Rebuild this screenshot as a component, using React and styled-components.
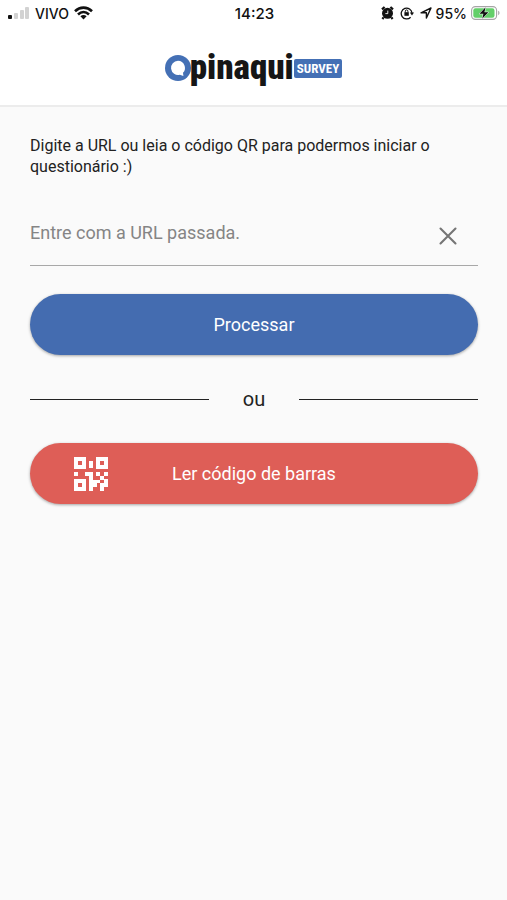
import React, { useState } from "react";
import styled, { createGlobalStyle } from "styled-components";

const QR_PATH =
  "M0 0h12v12H0zM4 4v4h4V4zM22 0h12v12H22zM26 4v4h4V4zM0 22h12v12H0zM4 26v4h4v-4z" +
  "M15 4h4v7h-4zM0 15h4v4H0zM11 15h8v8h-4v-4h-4zM22 15h4v4h-4zM30 15h4v4h-4zM26 19h4v4h-4z" +
  "M15 23h11v3h-3v4h-4v4h-4zM30 22h4v8h-4zM26 26h4v8h-4z";

const SignalIcon = () => (
  <svg width="22" height="14" viewBox="0 0 22 14" aria-hidden="true">
    <rect x="0" y="9" width="4" height="4" rx="1" fill="#111" />
    <rect x="6" y="7" width="4" height="6" rx="1" fill="#d2d2d2" />
    <rect x="12" y="4" width="4" height="9" rx="1" fill="#d2d2d2" />
    <rect x="17" y="1" width="4" height="12" rx="1" fill="#d2d2d2" />
  </svg>
);

const WifiIcon = () => (
  <svg width="19" height="14" viewBox="0 0 19 14" fill="none" stroke="#111" strokeWidth="2.6" aria-hidden="true">
    <path d="M1 5.2C6 .4 13 .4 18 5.2" />
    <path d="M4 8.5c3.4-3.2 7.6-3.2 11 0" />
    <path d="M6.4 10.3c1.9-1.6 4.3-1.6 6.2 0L9.5 13.6z" fill="#111" stroke="none" />
  </svg>
);

const AlarmIcon = () => (
  <svg width="13" height="14" viewBox="0 0 13 14" aria-hidden="true">
    <path d="M1 3.4 3.6 1M12 3.4 9.4 1M2.6 11.4 1.4 13M10.4 11.4l1.2 1.6" stroke="#111" strokeWidth="2.2" />
    <circle cx="6.5" cy="7.3" r="5.5" fill="#111" />
    <path d="M6.8 4.6v3H4.4" fill="none" stroke="#fff" strokeWidth=".9" />
  </svg>
);

const RotationLockIcon = () => (
  <svg width="14" height="14" viewBox="0 0 14 14" fill="none" stroke="#111" strokeWidth="1.3" aria-hidden="true">
    <path d="M10.6 11.2A5.4 5.4 0 1 1 12 7" />
    <path d="M9.8 6.6h4.2L12 9.4z" fill="#111" stroke="none" />
    <rect x="4.4" y="6.2" width="4.4" height="3.6" fill="#111" stroke="none" />
    <path d="M5.3 6.4V5.2a1.3 1.3 0 0 1 2.6 0v1.2" strokeWidth="1" />
  </svg>
);

const LocationIcon = () => (
  <svg width="12" height="12" viewBox="0 0 12 12" aria-hidden="true">
    <path d="M1 5.8 11 1 6.4 11V5.8z" fill="none" stroke="#111" strokeWidth="1.4" strokeLinejoin="round" />
  </svg>
);

const BatteryIcon = () => (
  <svg width="30" height="14" viewBox="0 0 30 14" aria-hidden="true">
    <rect x=".6" y=".6" width="25" height="12.8" rx="3.8" fill="#fff" stroke="#a5a5a5" strokeWidth="1.1" />
    <rect x="2.3" y="2.3" width="21.2" height="9.4" rx="2.2" fill="#63cf69" />
    <path d="M27.2 4.8c1.7.6 1.7 3.8 0 4.4z" fill="#a5a5a5" />
    <path d="M14.6 1.2 8.4 7.8h4l-1.2 5 6.2-6.6h-4z" fill="#111" stroke="#fff" strokeWidth="1" paintOrder="stroke" />
  </svg>
);

const LogoMark = () => (
  <svg width="26" height="26" viewBox="0 0 26 26" aria-hidden="true">
    <circle cx="13" cy="13" r="13" fill="#4470b5" />
    <path d="M13 5.8a7.1 7.1 0 0 1 5 12l.4 3.2-3.6-1.2A7.1 7.1 0 1 1 13 5.8z" fill="#fff" />
  </svg>
);

const App = () => {
  const [url, setUrl] = useState("");

  return (
    <Page>
      <GlobalStyle />
      <Header>
        <StatusBar>
          <StatusGroup>
            <SignalIcon />
            <span>VIVO</span>
            <WifiIcon />
          </StatusGroup>
          <Clock>14:23</Clock>
          <StatusGroup $end>
            <StatusIcons>
              <AlarmIcon />
              <RotationLockIcon />
              <LocationIcon />
            </StatusIcons>
            <span>95%</span>
            <BatteryIcon />
          </StatusGroup>
        </StatusBar>
        <Logo aria-label="Opinaqui Survey">
          <LogoMark />
          <LogoName>pinaqui</LogoName>
          <LogoTag>SURVEY</LogoTag>
        </Logo>
      </Header>

      <Content onSubmit={(e) => e.preventDefault()}>
        <Intro htmlFor="survey-url">
          Digite a URL ou leia o código QR para podermos iniciar o questionário :)
        </Intro>
        <Field>
          <UrlInput
            id="survey-url"
            type="text"
            placeholder="Entre com a URL passada."
            value={url}
            onChange={(e) => setUrl(e.target.value)}
          />
          <ClearButton type="button" aria-label="Limpar" onClick={() => setUrl("")}>
            <svg width="18" height="18" viewBox="0 0 18 18" aria-hidden="true">
              <path d="M1.5 1.5l15 15M16.5 1.5l-15 15" stroke="#757575" strokeWidth="2.1" strokeLinecap="round" />
            </svg>
          </ClearButton>
        </Field>
        <PillButton type="submit" $color="#446cb0">
          <span>Processar</span>
        </PillButton>
        <Divider>ou</Divider>
        <PillButton type="button" $color="#de5e57">
          <svg width="34" height="34" viewBox="0 0 34 34" aria-hidden="true">
            <path d={QR_PATH} fill="#fff" fillRule="evenodd" />
          </svg>
          <span>Ler código de barras</span>
        </PillButton>
      </Content>
    </Page>
  );
};

const GlobalStyle = createGlobalStyle`
  * {
    box-sizing: border-box;
  }

  body {
    margin: 0;
    background: #fafafa;
    color: #222;
    font-family: Roboto, "Liberation Sans", sans-serif;
  }

  button,
  input {
    font: inherit;
  }

  svg {
    flex: none;
  }
`;

const Page = styled.div`
  min-height: 100vh;
`;

const Header = styled.header`
  padding-bottom: 19px;
  background: #fff;
  border-bottom: 2px solid #ececec;
`;

const StatusBar = styled.div`
  display: grid;
  grid-template-columns: 1fr auto 1fr;
  align-items: center;
  height: 26px;
  padding: 0 6px 0 8px;
  color: #111;
  font-family: Inter, sans-serif;
  font-size: 14px;
  font-weight: 500;
`;

const Clock = styled.span`
  font-size: 15px;
`;

const StatusGroup = styled.div`
  display: flex;
  align-items: center;
  justify-content: ${({ $end }) => ($end ? "flex-end" : "flex-start")};
  gap: ${({ $end }) => ($end ? 4 : 5)}px;
`;

const StatusIcons = styled.div`
  display: flex;
  align-items: center;
  gap: 6px;
`;

const Logo = styled.h1`
  display: flex;
  align-items: center;
  justify-content: center;
  height: 36px;
  margin: 24px 0 0;
  font-family: "Roboto Condensed", Roboto, sans-serif;
  font-weight: 900;
`;

const LogoName = styled.span`
  margin-left: -1px;
  color: #161616;
  font-size: 35px;
  line-height: 36px;
`;

const LogoTag = styled.span`
  padding: 0 3px;
  border-radius: 2px;
  background: #4470b5;
  color: #fff;
  font-size: 13px;
  font-weight: 700;
  line-height: 19px;
`;

const Content = styled.form`
  display: flex;
  flex-direction: column;
  padding: 28px 29px 28px 30px;
`;

const Intro = styled.label`
  font-size: 16px;
  line-height: 21px;
`;

const Field = styled.div`
  display: flex;
  align-items: center;
  height: 60px;
  margin: 29px 0 28px;
  padding-right: 14px;
  border-bottom: 1px solid #a8a8a8;
`;

const UrlInput = styled.input`
  flex: 1;
  min-width: 0;
  padding: 0 0 6px;
  border: 0;
  outline: 0;
  background: none;
  color: #222;
  font-size: 18px;

  &::placeholder {
    color: #858585;
    opacity: 1;
  }
`;

const ClearButton = styled.button`
  display: grid;
  place-items: center;
  width: 32px;
  height: 32px;
  padding: 0;
  border: 0;
  background: none;
  cursor: pointer;
`;

const PillButton = styled.button`
  display: grid;
  grid-template-columns: 34px 1fr 34px;
  align-items: center;
  height: 61px;
  padding: 0 44px;
  border: 0;
  border-radius: 31px;
  background: ${({ $color }) => $color};
  box-shadow: 0 1px 3px rgba(0, 0, 0, 0.35);
  color: #fff;
  font-size: 18px;
  cursor: pointer;

  span {
    grid-column: 2;
  }
`;

const Divider = styled.div`
  display: grid;
  grid-template-columns: 2fr 1fr 2fr;
  align-items: center;
  height: 88px;
  font-size: 20px;
  text-align: center;

  &::before,
  &::after {
    content: "";
    height: 1px;
    background: #222;
  }
`;

export default App;
